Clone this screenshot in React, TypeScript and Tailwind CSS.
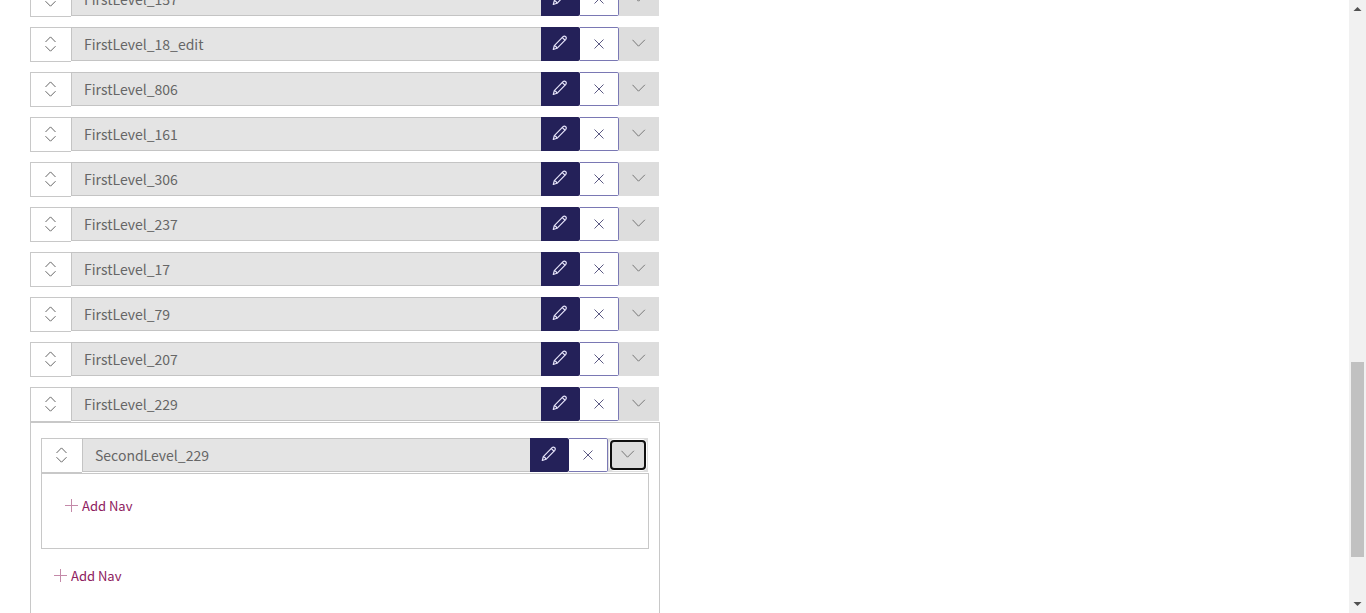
import React from "react";

const firstLevel = [
  "FirstLevel_157",
  "FirstLevel_18_edit",
  "FirstLevel_806",
  "FirstLevel_161",
  "FirstLevel_306",
  "FirstLevel_237",
  "FirstLevel_17",
  "FirstLevel_79",
  "FirstLevel_207",
  "FirstLevel_229",
];

function SortIcon() {
  return (
    <svg width="12" height="16" viewBox="0 0 12 16" fill="none" stroke="#666666" strokeWidth="1" aria-hidden="true">
      <path d="M.5 6 5.500.9l5 5.100M.5 10.200l5 5 5-5" />
    </svg>
  );
}

function PencilIcon() {
  return (
    <svg width="17" height="16" viewBox="0 0 17 16" fill="none" stroke="#e6e4fa" strokeWidth="1.2" strokeLinejoin="round" strokeLinecap="round" aria-hidden="true">
      <path d="M1.300 14.500 2.300 10.700 11.100 1.600q1.400-1 2.600.1 1.100 1.300.1 2.600L5 13.300z" />
      <path d="M10.400 2.600l2.400 2.400" />
      <path d="M2.500 10.900q1.900.3 2.300 2.100" />
    </svg>
  );
}

function CloseIcon() {
  return (
    <svg width="10" height="10" viewBox="0 0 10 10" fill="none" stroke="#5c5a84" strokeWidth="1" aria-hidden="true">
      <path d="M.5.5l9 9M9.500.5l-9 9" />
    </svg>
  );
}

function ChevronIcon() {
  return (
    <svg width="14" height="8" viewBox="0 0 14 8" fill="none" stroke="#777777" strokeWidth="1" aria-hidden="true">
      <path d="M.5.8 6.500 7.200 12.900.8" />
    </svg>
  );
}

function NavRow({ name, focused = false }: { name: string; focused?: boolean }) {
  return (
    <div className="mr-px flex h-[35px] items-start">
      <button
        type="button"
        aria-label={`Move ${name}`}
        className="flex h-[35px] w-[41px] shrink-0 items-center justify-center border border-r-0 border-[#c8c8c8] bg-white pb-0.5"
      >
        <SortIcon />
      </button>
      <input
        type="text"
        readOnly
        aria-label="Nav name"
        value={name}
        className="h-[34px] min-w-0 flex-1 border border-r-0 border-[#c4c4c4] bg-[#e4e4e4] px-3 text-sm text-[#666666] outline-none"
      />
      <button
        type="button"
        aria-label={`Edit ${name}`}
        className="flex h-[34px] w-[39px] shrink-0 items-center justify-center rounded-r-xs bg-[#242159] pb-0.5"
      >
        <PencilIcon />
      </button>
      <button
        type="button"
        aria-label={`Delete ${name}`}
        className="flex h-[34px] w-[39px] shrink-0 items-center justify-center rounded-r-xs border border-l-0 border-[#7a78b4] bg-white"
      >
        <CloseIcon />
      </button>
      {focused ? (
        <div className="h-[34px] w-10 shrink-0 bg-[#dddddd] p-0.5">
          <button
            type="button"
            aria-label={`Toggle ${name}`}
            className="flex h-[30px] w-9 items-center justify-center rounded-sm border-2 border-[#101010] bg-[#dddddd] pb-0.5 ring-1 ring-white"
          >
            <ChevronIcon />
          </button>
        </div>
      ) : (
        <button
          type="button"
          aria-label={`Toggle ${name}`}
          className="flex h-[34px] w-10 shrink-0 items-center justify-center bg-[#dddddd] pb-0.5"
        >
          <ChevronIcon />
        </button>
      )}
    </div>
  );
}

function AddNav() {
  return (
    <button type="button" className="flex h-6 items-center gap-1 text-[13px] text-[#8e2160]">
      <svg width="13" height="13" viewBox="0 0 13 13" fill="none" stroke="#c48aa9" strokeWidth="1" className="mb-0.5" aria-hidden="true">
        <path d="M6.500 0v13M0 6.500h13" />
      </svg>
      Add Nav
    </button>
  );
}

function ScrollBar() {
  return (
    <div className="flex w-[17px] shrink-0 flex-col items-center bg-[#f1f1f1]" aria-hidden="true">
      <svg width="17" height="17" viewBox="0 0 17 17" fill="#505050">
        <path d="M4.500 11h8l-4-4z" />
      </svg>
      <div className="flex w-full flex-1 flex-col items-center">
        <div className="grow-[345]" />
        <div className="w-[13px] grow-[195] bg-[#c1c1c1]" />
        <div className="grow-[39]" />
      </div>
      <svg width="17" height="17" viewBox="0 0 17 17" fill="#505050">
        <path d="M4.500 6h8l-4 4z" />
      </svg>
    </div>
  );
}

export default function App() {
  return (
    <div className="flex h-screen overflow-hidden bg-white font-['Noto_Sans_CJK_SC',sans-serif]">
      <main className="min-w-0 flex-1 overflow-hidden px-[30px]">
        <div className="-mt-[18px] flex w-[630px] max-w-full flex-col">
          <ul className="flex flex-col gap-2.5">
            {firstLevel.map((name) => (
              <li key={name}>
                <NavRow name={name} />
              </li>
            ))}
          </ul>
          <section className="border border-[#c8c8c8] px-2.5 pt-[15px] pb-10">
            <NavRow name="SecondLevel_229" focused />
            <div className="mb-[15px] border border-[#c8c8c8] px-[23px] pt-5 pb-[30px]">
              <AddNav />
            </div>
            <div className="px-[13px]">
              <AddNav />
            </div>
          </section>
        </div>
      </main>
      <ScrollBar />
    </div>
  );
}
